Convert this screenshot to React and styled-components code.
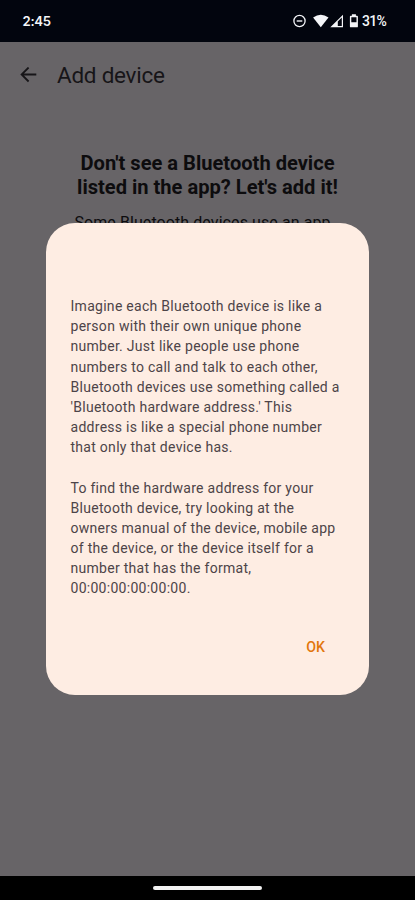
import React from "react";
import styled, { createGlobalStyle } from "styled-components";

const GlobalStyle = createGlobalStyle`
  * { box-sizing: border-box; }
  body { margin: 0; background: #000; font-family: Roboto, "Liberation Sans", sans-serif; }
`;

const Phone = styled.div`
  position: relative;
  display: flex;
  flex-direction: column;
  width: 415px;
  height: 900px;
  overflow: hidden;
  background: #676467;
`;

const StatusBar = styled.header`
  display: flex;
  align-items: center;
  justify-content: space-between;
  flex: none;
  height: 42px;
  padding: 0 28.7px 0 22.5px;
  background: #02050e;
  color: #f4f5f8;
`;

const Clock = styled.span`
  font-family: Inter, Roboto, sans-serif;
  font-size: 13.2px;
  font-weight: 600;
  line-height: 16px;
  letter-spacing: -0.3px;
`;

const StatusIcons = styled.div`
  display: flex;
  align-items: center;
  svg { display: block; }
`;

const Battery = styled.span`
  margin-left: 4px;
  font-size: 14px;
  font-weight: 500;
  line-height: 16px;
  letter-spacing: -0.6px;
`;

const AppBar = styled.div`
  display: flex;
  align-items: center;
  flex: none;
  height: 66px;
  padding-left: 20px;
  gap: 20px;
  color: #171518;
`;

const BackButton = styled.button`
  display: flex;
  padding: 0;
  border: 0;
  background: none;
  color: inherit;
`;

const Title = styled.h1`
  margin: 0;
  font-size: 22.5px;
  font-weight: 400;
  line-height: 28px;
  letter-spacing: -0.25px;
`;

const Content = styled.main`
  flex: 1;
  padding-top: 43px;
  text-align: center;
  white-space: nowrap;
  color: #0d0c0e;
`;

const Heading = styled.h2`
  margin: 0;
  font-size: 20.1px;
  font-weight: 700;
  line-height: 24px;
`;

const Intro = styled.p`
  margin: 14px 0 0;
  padding-right: 10px;
  font-size: 16px;
  line-height: 20px;
  letter-spacing: 0.08px;
`;

const Dialog = styled.section`
  position: absolute;
  left: 46px;
  top: 223px;
  display: flex;
  flex-direction: column;
  width: 323px;
  height: 471.5px;
  padding: 73px 24px 28px 24.5px;
  border-radius: 29px;
  background: #feede3;
`;

const Message = styled.p`
  margin: 0 0 20.2px;
  color: #4d4448;
  font-size: 14px;
  line-height: 20.17px;
  letter-spacing: 0.28px;
  white-space: nowrap;
`;

const Confirm = styled.button`
  align-self: flex-end;
  margin: 18px 20px 0 0;
  padding: 0;
  border: 0;
  background: none;
  color: #e2760c;
  font: 500 14.2px/20px Roboto, sans-serif;
`;

const NavigationBar = styled.footer`
  display: flex;
  align-items: center;
  justify-content: center;
  flex: none;
  height: 24px;
  background: #000;
`;

const HomeHandle = styled.div`
  width: 109px;
  height: 4px;
  border-radius: 2px;
  background: #f3f3f3;
`;

const messages = [
  [
    "Imagine each Bluetooth device is like a",
    "person with their own unique phone",
    "number. Just like people use phone",
    "numbers to call and talk to each other,",
    "Bluetooth devices use something called a",
    "'Bluetooth hardware address.' This",
    "address is like a special phone number",
    "that only that device has.",
  ],
  [
    "To find the hardware address for your",
    "Bluetooth device, try looking at the",
    "owners manual of the device, mobile app",
    "of the device, or the device itself for a",
    "number that has the format,",
    "00:00:00:00:00:00.",
  ],
];

function Lines({ items }) {
  return items.map((line, i) => (
    <React.Fragment key={line}>
      {i > 0 && <br />}
      {line}
    </React.Fragment>
  ));
}

function StatusGlyphs() {
  return (
    <svg width="66" height="16" viewBox="0 0 66 16" fill="currentColor">
      <circle cx="7.5" cy="8" r="5.6" fill="none" stroke="currentColor" strokeWidth="1.3" />
      <path d="M4.7 7.3h5.6v1.4H4.7z" />
      <path d="M28.8 14.2 21.1 4.6Q28.8-1.2 36.5 4.6Z" />
      <path d="M38.3 14.2 51 1.7V14.2Z M45.8 8.4V12.9h4V4.6Z" fillRule="evenodd" />
      <path d="M59.9 1.2h4v1.5h1.1q.9 0 .9.9v9.8q0 .9-.9.9h-6.2q-.9 0-.9-.9V3.6q0-.9.9-.9h1.1Z M59.3 4.3v4.9h5.2V4.3Z" fillRule="evenodd" />
    </svg>
  );
}

export default function App() {
  return (
    <>
      <GlobalStyle />
      <Phone>
        <StatusBar>
          <Clock>2:45</Clock>
          <StatusIcons>
            <StatusGlyphs />
            <Battery>31%</Battery>
          </StatusIcons>
        </StatusBar>
        <AppBar>
          <BackButton aria-label="Back">
            <svg width="17" height="16" viewBox="0 0 17 16" fill="none" stroke="currentColor" strokeWidth="1.8">
              <path d="M16.3 7.5H2M8.6.5 1.6 7.5l7 7" />
            </svg>
          </BackButton>
          <Title>Add device</Title>
        </AppBar>
        <Content>
          <Heading>
            Don't see a Bluetooth device
            <br />
            listed in the app? Let's add it!
          </Heading>
          <Intro>Some Bluetooth devices use an app</Intro>
        </Content>
        <NavigationBar>
          <HomeHandle />
        </NavigationBar>
        <Dialog role="dialog">
          {messages.map((lines) => (
            <Message key={lines[0]}>
              <Lines items={lines} />
            </Message>
          ))}
          <Confirm>OK</Confirm>
        </Dialog>
      </Phone>
    </>
  );
}
